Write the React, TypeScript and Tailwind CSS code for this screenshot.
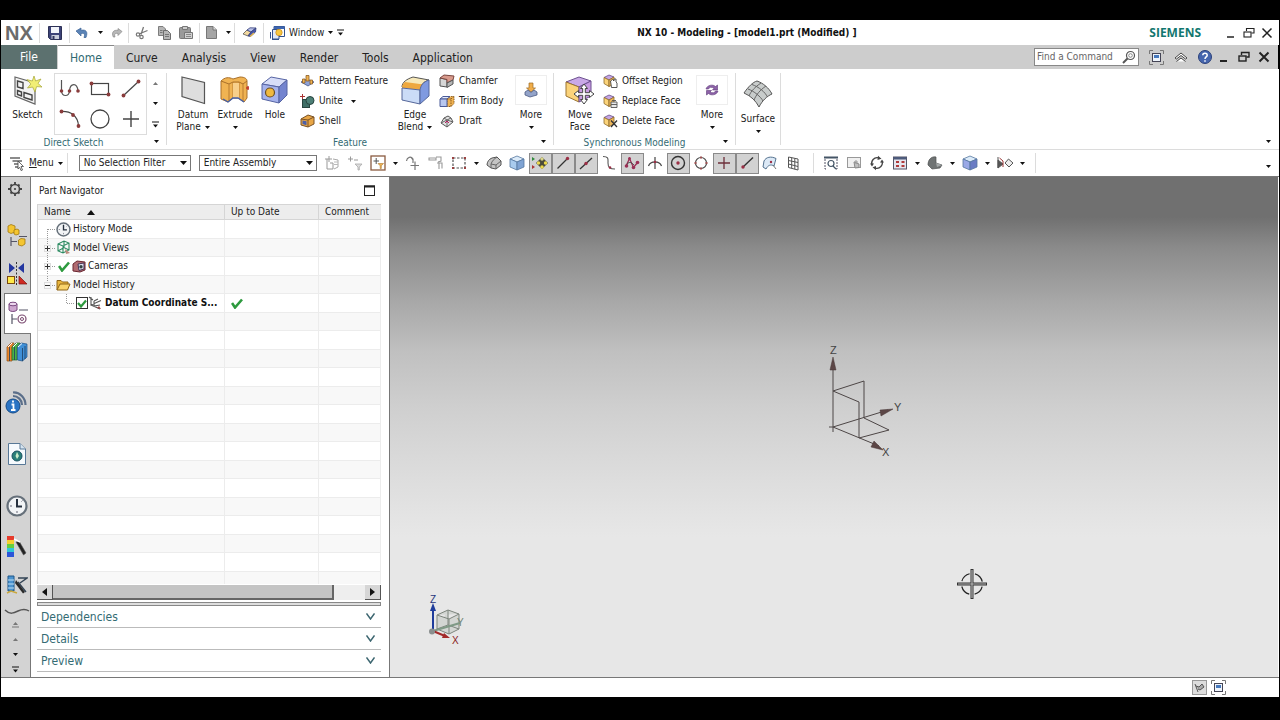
import React, { useState } from 'react';

const EMPTY_ROWS = 15;

const TABS = ['Home', 'Curve', 'Analysis', 'View', 'Render', 'Tools', 'Application'];

const SECTIONS = ['Dependencies', 'Details', 'Preview'];

function Svg({ w = 16, h = 16, children }: { w?: number; h?: number; children: React.ReactNode }) {
  return (
    <svg width={w} height={h} viewBox={`0 0 ${w} ${h}`} fill="none" className="shrink-0" aria-hidden="true">
      {children}
    </svg>
  );
}

/* ---------- small shared pieces ---------- */

const Caret = ({ up = false, dim = false }: { up?: boolean; dim?: boolean }) => (
  <Svg w={5} h={3}>
    <path d={up ? 'M0 3L2.5 0L5 3Z' : 'M0 0H5L2.5 3Z'} fill={dim ? '#777' : '#111'} />
  </Svg>
);

const BarCaret = ({ up = false, dim = false }: { up?: boolean; dim?: boolean }) => (
  <Svg w={7} h={7}>
    {up ? (
      <path d="M1 4L3.5 1L6 4ZM0 5.5H7V6.5H0Z" fill={dim ? '#777' : '#111'} />
    ) : (
      <path d="M0 0.5H7V1.5H0ZM1 3.5H6L3.5 6.5Z" fill={dim ? '#777' : '#111'} />
    )}
  </Svg>
);

const Sep = ({ tall = false }: { tall?: boolean }) => (
  <div className={`w-px shrink-0 bg-[#dcdcdc] ${tall ? 'mt-0.5 h-[72px]' : 'h-5'}`} />
);

const MinimizeIcon = ({ bold = false }) => (
  <Svg w={12} h={12}><path d="M2 10H9" stroke="#222" strokeWidth={bold ? 2 : 1.5} /></Svg>
);
const RestoreIcon = ({ bold = false }) => (
  <Svg w={12} h={12}>
    <path d="M3.5 4V1.5H11V6H8.5" stroke="#222" strokeWidth={bold ? 1.4 : 1.1} />
    <rect x="1" y="5" width="7" height="5" stroke="#222" strokeWidth={bold ? 1.4 : 1.1} />
  </Svg>
);
const CloseIcon = ({ bold = false }) => (
  <Svg w={12} h={12}><path d="M1.5 1.5L10.5 10.5M10.5 1.5L1.5 10.5" stroke="#222" strokeWidth={bold ? 2 : 1.5} /></Svg>
);

const FullScreenIcon = () => (
  <Svg w={15} h={15}>
    <path d="M.5 4V.5H4M11 .5H14.5V4M14.5 11V14.5H11M4 14.5H.5V11" stroke="#777" />
    <rect x="3.5" y="3.5" width="8" height="8" fill="#eef4fb" stroke="#445" />
    <path d="M5 5H10V8H5Z" fill="#4779bd" />
  </Svg>
);

/* ---------- quick access icons ---------- */

const SaveIcon = () => (
  <Svg w={14} h={14}>
    <path d="M.5 .5H13.5V13.5H2.5L.5 11.5Z" fill="#3c4277" stroke="#2c3055" />
    <path d="M3 1H11V7H3Z" fill="#f2f4fa" />
    <path d="M3.5 9H11V13H3.5Z" fill="#c9cddb" />
    <path d="M4.5 10H6.5V13H4.5Z" fill="#30355f" />
  </Svg>
);
const UndoIcon = () => (
  <Svg w={14} h={12}>
    <path d="M1 4L6 1V3.4C11 2 13.2 5 11 10.5H9C10.3 7 9 5.8 6 6.6V9Z" fill="#5b83b6" stroke="#3b6396" strokeWidth=".7" />
  </Svg>
);
const RedoIcon = () => (
  <Svg w={12} h={12}>
    <path d="M11 4.5L7 1.5V3.4C2.5 2.6 .3 5.5 2.3 10H4C3 7 4 6 7 6.4V8.5Z" fill="#b8b8b8" stroke="#888" strokeWidth=".7" />
  </Svg>
);
const CutIcon = () => (
  <Svg w={14} h={14}>
    <path d="M8.5 1L6 8.5M12.5 4.5L4 8" stroke="#777" strokeWidth="1.3" />
    <circle cx="3" cy="8.5" r="1.7" stroke="#777" strokeWidth="1.2" />
    <circle cx="6.5" cy="11" r="1.7" stroke="#777" strokeWidth="1.2" />
  </Svg>
);
const CopyIcon = () => (
  <Svg w={13} h={14}>
    <path d="M.5 .5H5L7.5 3V9.5H.5Z" fill="#b6b6b6" stroke="#7d7d7d" />
    <path d="M5.5 4.5H9.5L12.5 7.5V13.5H5.5Z" fill="#b6b6b6" stroke="#6d6d6d" />
    <path d="M7 8.5H11M7 10.5H11M2 4.5H4.5M2 6.5H4.5" stroke="#777" />
  </Svg>
);
const PasteIcon = () => (
  <Svg w={14} h={14}>
    <rect x=".5" y="1.5" width="11" height="11" rx="1" fill="#9a9a9a" stroke="#777" />
    <path d="M3.5 .5H8.5V3.5H3.5Z" fill="#ccc" stroke="#777" />
    <path d="M5.5 6.5H13.5V12.5H5.5Z" fill="#d0d0d0" stroke="#777" />
    <path d="M7 8.5H12M7 10.5H12" stroke="#888" />
  </Svg>
);
const DocIcon = () => (
  <Svg w={11} h={13}><path d="M.5 .5H7L10.5 4V12.5H.5Z" fill="#a5a5a5" stroke="#777" /><path d="M7 .5V4H10.5" fill="#ddd" stroke="#777" /></Svg>
);
const EraserIcon = () => (
  <Svg w={15} h={11}>
    <path d="M1 7L5 3L9 5L6 9Z" fill="#f3d9a0" stroke="#555" strokeWidth=".8" />
    <path d="M5 3L8 .8L14 1L9 5Z" fill="#b9c0e6" stroke="#333f7c" strokeWidth=".8" />
    <path d="M9 5L14 1L13.5 5L8.5 9.5L6 9Z" fill="#4a58a8" stroke="#333f7c" strokeWidth=".8" />
    <path d="M8 9.5L12 6" stroke="#e7b84c" strokeWidth="1.4" />
  </Svg>
);
const WindowIcon = () => (
  <Svg w={15} h={14}>
    <path d="M4 .5H14.5V10.5H4Z" fill="#fff" stroke="#31508c" />
    <path d="M4 .5H14.5V3H4Z" fill="#3e66b0" />
    <path d="M2.5 3.5H9V13H2.5Z" fill="#dfe8f7" stroke="#31508c" />
    <circle cx="9" cy="6.5" r="3.2" fill="#f7c63f" stroke="#c58a1b" strokeWidth=".7" />
    <path d="M.5 12.5V6M2 13.5H9" stroke="#31508c" />
  </Svg>
);

/* ---------- ribbon icons ---------- */

const SketchIcon = () => (
  <Svg w={30} h={29}>
    <path d="M2 1L22 7V28L2 20Z" fill="#f3f3f3" stroke="#666" strokeWidth="1.2" />
    <path d="M4.5 5L10 6.5V12.5L4.5 11ZM4.5 14.5L8.5 16V20L4.5 18.5ZM11 16.5L19 19V24L11 21.5Z" stroke="#444" strokeWidth="1.4" />
    <path d="M21 0L22.6 5L28 3L25 7.4L29 11L23.6 10.6L22 16L19.6 11L14.5 12L17.8 8L14 3.6L19.3 5Z" fill="#f1ee75" stroke="#a5a535" strokeWidth=".7" />
  </Svg>
);
const SplineIcon = () => (
  <Svg w={22} h={20}>
    <path d="M2.5 1V12C3 18 10 18 10.500 12C11 4 18.500 3 19 12" stroke="#555" strokeWidth="1.2" />
    <circle cx="2.5" cy="12" r="1.8" fill="#8a3c3c" /><circle cx="10.5" cy="12" r="1.8" fill="#8a3c3c" /><circle cx="19" cy="12" r="1.8" fill="#8a3c3c" />
  </Svg>
);
const RectIcon = () => (
  <Svg w={22} h={18}>
    <rect x="2.5" y="3.5" width="17" height="11" stroke="#444" strokeWidth="1.2" />
    <circle cx="2.5" cy="3.5" r="1.9" fill="#8a3c3c" /><circle cx="19.5" cy="14.5" r="1.9" fill="#8a3c3c" />
  </Svg>
);
const LineIcon = () => (
  <Svg w={20} h={20}>
    <path d="M2 17L18 2" stroke="#444" strokeWidth="1.2" /><circle cx="2.5" cy="16.5" r="1.9" fill="#8a3c3c" /><circle cx="17.5" cy="2.5" r="1.9" fill="#8a3c3c" />
  </Svg>
);
const ArcIcon = () => (
  <Svg w={22} h={20}>
    <path d="M2 2.5C12 2 19 7 19.5 17" stroke="#444" strokeWidth="1.2" />
    <circle cx="2.5" cy="2.5" r="1.9" fill="#8a3c3c" /><circle cx="14" cy="6" r="1.9" fill="#8a3c3c" /><circle cx="19.5" cy="17" r="1.9" fill="#8a3c3c" />
  </Svg>
);
const CircleIcon = () => <Svg w={22} h={22}><circle cx="11" cy="11" r="9" stroke="#444" strokeWidth="1.3" /></Svg>;
const PlusIcon = () => <Svg w={18} h={18}><path d="M9 1V17M1 9H17" stroke="#444" strokeWidth="1.4" /></Svg>;

const PlaneIcon = () => (
  <Svg w={28} h={29}><path d="M3 1L25.5 6.5V27.5L3 20.5Z" fill="#dedede" stroke="#555" strokeWidth="1.2" /></Svg>
);
const ExtrudeIcon = () => (
  <Svg w={30} h={28}>
    <path d="M1 5C5 1 9 1 13 3L20 1C25 1 27 3 27 5V22L24 26L18 22H13L8 26L1 23Z" fill="#f0b352" stroke="#a9702a" />
    <path d="M1 5L9 8L13 6H19L23 8L27 5" stroke="#a9702a" />
    <path d="M9 8V25M13 6V22M19 6V22M23 8V25" stroke="#b97c30" />
    <path d="M13 7H19V22H13Z" fill="#f8cf8a" />
    <path d="M3 23L8 26L13 22H18L24 26" stroke="#4560a8" strokeWidth="1.4" />
    <path d="M26 12H29M28 10V14" stroke="#c0392b" strokeWidth="1.4" />
  </Svg>
);
const HoleIcon = () => (
  <Svg w={28} h={28}>
    <path d="M1 8L10 1L26 4L18 11Z" fill="#d7ddf8" stroke="#5664a3" />
    <path d="M1 8L18 11V27L1 23Z" fill="#a5b2ec" stroke="#5664a3" />
    <path d="M18 11L26 4V19L18 27Z" fill="#7384cf" stroke="#5664a3" />
    <circle cx="9" cy="16.5" r="4.5" fill="#f0b93f" stroke="#6b4f22" strokeWidth="1.2" />
  </Svg>
);
const BlendIcon = () => (
  <Svg w={29} h={29}>
    <path d="M1 11C1 6 6 3 12 1L28 4C22 6 20 9 19 13Z" fill="#f7e9b9" stroke="#555" />
    <path d="M1 12C1 9 2 7.500 4 6L22.500 8.500C20.500 10 19.500 12 19 14Z" fill="#eea83f" />
    <path d="M1 12L19 14V28L1 24Z" fill="#cbdcf7" stroke="#55679a" />
    <path d="M19 14C20 9 22 6 28 4V20L19 28Z" fill="#7f9ae0" stroke="#55679a" />
  </Svg>
);
const MoveFaceIcon = () => (
  <Svg w={30} h={29}>
    <path d="M1 6L14 1L26 5L14 11Z" fill="#c9a8e6" stroke="#6d5190" />
    <path d="M1 6L14 11V26L1 20Z" fill="#fbd37a" stroke="#9b7430" />
    <path d="M14 11L26 5V20L14 26Z" fill="#c79ae0" stroke="#6d5190" />
    <path d="M19 8L22.5 12.5H20.3V16.7H24.5V14.5L29 18L24.5 21.5V19.3H20.3V23.5H22.5L19 28L15.5 23.5H17.7V19.3H13.5V21.5L9 18L13.5 14.5V16.7H17.7V12.5H15.5Z" fill="#fff" stroke="#444" />
  </Svg>
);
const SurfaceIcon = () => (
  <Svg w={30} h={28}>
    <path d="M1 13C5 7 10 2 14 1C20 3 26 8 29 14C24 16 19 21 16 27C13 21 8 16 1 13Z" fill="#c8cccb" stroke="#555" />
    <path d="M5 9C11 11 18 17 20 21M9 4.5C16 7 22 12 24.5 17M18 3C12 7 8 11 6 16M23 6C17 10 13 15 11 20" stroke="#666" />
  </Svg>
);
const FeatureMoreIcon = () => (
  <Svg w={14} h={16}>
    <path d="M5 1H9V6H11.5L7 10L2.5 6H5Z" fill="#f0ad4a" stroke="#9b6a24" strokeWidth=".7" />
    <path d="M1 10L4 8L7 10.5L10 8L13 10V13L6 15L1 13Z" fill="#93a3c9" stroke="#4a5982" strokeWidth=".8" />
  </Svg>
);
const SyncMoreIcon = () => (
  <Svg w={16} h={14}>
    <path d="M2 6C3 2 9 1 11.5 3.5L13.5 2V7H8.5L10 5.3C8 3.8 5 4 4.5 6Z" fill="#8d62a8" stroke="#5e3b78" strokeWidth=".6" />
    <path d="M14 8C13 12 7 13 4.5 10.5L2.5 12V7.5H7.5L6 9C8 10.3 11 10 11.5 8Z" fill="#8d62a8" stroke="#5e3b78" strokeWidth=".6" />
  </Svg>
);

const PatternIcon = () => (
  <Svg w={15} h={14}>
    <path d="M1 8L7 5L14 8L8 12Z" fill="#8fa3d8" stroke="#45568a" strokeWidth=".8" />
    <path d="M6 1.5H9V7H6Z" fill="#f0b352" stroke="#8a5d23" strokeWidth=".8" />
    <path d="M2.5 5H5V9H2.5ZM10 6H12.5V10H10Z" fill="#f0b352" stroke="#8a5d23" strokeWidth=".8" />
  </Svg>
);
const UniteIcon = () => (
  <Svg w={15} h={14}>
    <rect x="2.5" y="5.5" width="7" height="8" fill="#3f6e66" stroke="#28443f" />
    <circle cx="10" cy="6.5" r="4" fill="#4d7f76" stroke="#28443f" />
    <path d="M2.5 0V5M0 2.5H5" stroke="#a33" strokeWidth="1" />
  </Svg>
);
const ShellIcon = () => (
  <Svg w={15} h={14}>
    <path d="M1 5L8 1L14 3V10L8 13L1 11Z" fill="#e8a646" stroke="#7a5226" />
    <path d="M1 5L8 6L14 3M8 6V13" stroke="#7a5226" />
    <path d="M2.5 6.5L6.5 7.3V11.3L2.5 10Z" fill="#4c5fa8" />
  </Svg>
);
const ChamferIcon = () => (
  <Svg w={16} h={15}>
    <path d="M1 4L8 5.5V13L1 12Z" fill="#d6d6d6" stroke="#555" />
    <path d="M1 4L5 1L15 2L14 6L8 9V5.5Z" fill="#d89a8c" stroke="#7a4740" />
    <path d="M8 9L14 6V10L8 13.5Z" fill="#b5b5b5" stroke="#555" />
  </Svg>
);
const TrimIcon = () => (
  <Svg w={16} h={13}>
    <path d="M8 4L11 1.5H15V8.5L12 11.5H8Z" fill="#f0b352" stroke="#8a5d23" strokeDasharray="1.5 1" />
    <path d="M1 4L4 1.5H11L8 4Z" fill="#e4ebfa" stroke="#4a5a98" />
    <path d="M1 4H8V11.5H1Z" fill="#b8c7ef" stroke="#4a5a98" />
    <path d="M8 4H12V11.5M12 4L15 1.5" stroke="#8a5d23" strokeDasharray="1.5 1" />
  </Svg>
);
const DraftIcon = () => (
  <Svg w={14} h={13}>
    <path d="M1 8L4 3L8 1L11 3L13 7L7 12Z" fill="#e3e3e3" stroke="#555" />
    <path d="M4 3L7 5L11 3M7 5V12M1 8L7 5L13 7" stroke="#666" />
    <path d="M5 8L7 6L9 8" stroke="#b05" strokeWidth=".9" />
  </Svg>
);
const FaceIcon = ({ kind }: { kind: 'offset' | 'replace' | 'delete' }) => (
  <Svg w={15} h={14}>
    <path d="M1 3.5L6 1L11 3L6 6Z" fill="#c6a6e2" stroke="#67508a" strokeWidth=".8" />
    <path d="M1 3.5L6 6V12.5L1 9.5Z" fill="#fbd37a" stroke="#8d6a2a" strokeWidth=".8" />
    <path d="M6 6L11 3V10L6 12.5Z" fill="#eeb75a" stroke="#8d6a2a" strokeWidth=".8" />
    {kind === 'offset' && <path d="M7.5 7L9.5 5.5L11 7V5H13V8L14 9V13.5H8.5Z" fill="#fff" stroke="#444" strokeWidth=".9" />}
    {kind === 'replace' && <path d="M8 8H14V13.5H8ZM8 10.5H14M9 6.5H13" fill="#e9e9e9" stroke="#555" strokeWidth=".9" />}
    {kind === 'delete' && <path d="M8 6.5L14 13M14 6.5L8 13" stroke="#333" strokeWidth="1.3" />}
  </Svg>
);

/* ---------- selection bar icons ---------- */

const MenuIcon = () => (
  <Svg w={16} h={15}>
    <path d="M1 2H11M3.5 5H13M5 8H10M6 11H10" stroke="#666" strokeWidth="1.5" />
    <path d="M9 5L14.5 10.5H12L13.5 14L12 14.5L10.7 11.3L9 13Z" fill="#fff" stroke="#444" strokeWidth=".8" />
  </Svg>
);
const FilterResetIcon = () => (
  <Svg>
    <path d="M3 4V14H9V8H6M1 4H8M5 1V7" stroke="#999" /><path d="M9 4L14 5V12L10 14" stroke="#aaa" /><path d="M10 7H14M10 9.5H14" stroke="#bbb" />
  </Svg>
);
const FilterOffIcon = () => (
  <Svg><path d="M1 4H6M3.5 1.5V6.5M7 5H11" stroke="#999" /><path d="M8 9H15L12.3 12V15H11V12Z" fill="#ddd" stroke="#aaa" strokeWidth=".8" /></Svg>
);
const FilterOnIcon = () => (
  <Svg>
    <rect x="1" y="1" width="14" height="14" stroke="#8a5b40" strokeWidth="1.3" />
    <path d="M3.5 6H9M6.2 3V9" stroke="#555" /><path d="M8 8.5H13.5L11.3 10.8V13.5H10.2V10.8Z" fill="#f0b352" stroke="#b0772a" strokeWidth=".6" />
  </Svg>
);
const SnapCurveIcon = () => (
  <Svg><path d="M1.5 6C2 2 6 1 8 4V8M8 5L6.5 3M5.5 10.5H14M10 6.5V15" stroke="#777" strokeWidth="1.2" /></Svg>
);
const HandIcon = () => (
  <Svg><path d="M1 3H8V5H1ZM8 2H13V6L10 7M9 8H14V13.5M11 8V14" stroke="#999" strokeWidth="1.1" /></Svg>
);
const MarqueeIcon = () => (
  <Svg w={17}>
    <rect x="2" y="3" width="12" height="10" stroke="#555" strokeWidth="1.2" strokeDasharray="2.5 1.5" />
    <path d="M1 2H3V4H1ZM13 2H15V4H13ZM1 12H3V14H1ZM13 12H15V14H13Z" fill="#9a4141" />
  </Svg>
);
const BlockIcon = () => (
  <Svg><path d="M1 10C1 7 3 4 6 3L11 2L15 6V10L10 14L5 13Z" fill="#c4c4c4" stroke="#555" /><path d="M5 13V9C6 6 8 4 11 2M5 9L10 10V14M10 10L15 6" stroke="#666" /></Svg>
);
const ShadedCubeIcon = ({ left = '#a9cbee', right = '#7fa3d3' }: { left?: string; right?: string }) => (
  <Svg>
    <path d="M1 4L8 1L15 4L8 7Z" fill="#dcebf9" stroke="#55779f" strokeWidth=".8" />
    <path d="M1 4L8 7V15L1 12Z" fill={left} stroke="#55779f" strokeWidth=".8" />
    <path d="M15 4L8 7V15L15 12Z" fill={right} stroke="#55779f" strokeWidth=".8" />
  </Svg>
);
const SnapPointIcon = () => (
  <Svg w={18}>
    <path d="M1 2L4 4L1 6Z" fill="#2f8b3a" /><path d="M1 10L4 12L1 14Z" fill="#a33" />
    <path d="M11 2L14 5L17 8L14 11L11 14L8 11L5 8L8 5Z" fill="#4b4b3c" />
    <circle cx="11" cy="4" r="1.7" fill="#d9d58a" /><circle cx="7.5" cy="8" r="1.7" fill="#ecd94c" /><circle cx="14.5" cy="8" r="1.7" fill="#ecd94c" /><circle cx="11" cy="12" r="1.7" fill="#ecd94c" />
  </Svg>
);
const EndPointIcon = () => <Svg><path d="M2.5 13.5L12.5 3.5" stroke="#333" strokeWidth="1.3" /><circle cx="12.5" cy="3.5" r="1.7" fill="#9b2f45" /></Svg>;
const MidPointIcon = () => <Svg><path d="M2 14L14 3" stroke="#333" strokeWidth="1.3" /><circle cx="8" cy="8.5" r="1.7" fill="#9b2f45" /></Svg>;
const ControlPointIcon = () => <Svg><path d="M2 1.5C8 1.5 7 4 7 8C7 13 9 14 14 14" stroke="#555" strokeWidth="1.1" /><circle cx="9" cy="12.5" r="1.3" fill="#9b2f45" /></Svg>;
const PoleIcon = () => (
  <Svg>
    <path d="M2 11L5.5 3.5L9.5 12.5L13.5 7.5" stroke="#9b2f55" strokeWidth="1.3" /><path d="M2 11C5 5 8 8 10 10" stroke="#444" />
    <circle cx="2.5" cy="11" r="1.8" fill="#9b2f55" /><circle cx="5.5" cy="3.5" r="1.5" fill="#9b2f55" /><circle cx="9.5" cy="12.5" r="1.8" fill="#9b2f55" /><circle cx="13.5" cy="7.5" r="1.8" fill="#9b2f55" />
  </Svg>
);
const IntersectIcon = () => <Svg><path d="M8 2V14M1.5 11C3.5 5.5 12.5 5.5 14.5 11" stroke="#444" strokeWidth="1.2" /><circle cx="8" cy="7" r="1.3" fill="#9b2f45" /></Svg>;
const CenterIcon = () => <Svg><circle cx="8" cy="8" r="6.5" stroke="#333" strokeWidth="1.4" /><circle cx="8" cy="8" r="1.7" fill="#9b2f45" /></Svg>;
const QuadrantIcon = () => (
  <Svg><circle cx="8" cy="8" r="5.5" stroke="#444" strokeWidth="1.2" /><path d="M7 1.5H9V3.5H7ZM7 12.5H9V14.5H7ZM1.5 7H3.5V9H1.5ZM12.5 7H14.5V9H12.5Z" fill="#9b4f4f" /></Svg>
);
const ExistingPointIcon = () => <Svg><path d="M8 2V14M2 8H14" stroke="#6d2f3a" strokeWidth="1.3" /></Svg>;
const PointOnCurveIcon = () => <Svg><path d="M4 12L14 2.5" stroke="#333" strokeWidth="1.4" /><circle cx="4" cy="12" r="1.7" fill="#9b2f45" /></Svg>;
const PointOnFaceIcon = () => (
  <Svg><path d="M2 6C4 2 9 1 14 3.5L12 11C9 9 6 10 4 14L1 12Z" fill="#dce9f6" stroke="#54728f" /><circle cx="9" cy="7" r="1.2" fill="#9b2f45" /><path d="M11 10L14 14" stroke="#777" /></Svg>
);
const GridIcon = () => <Svg><path d="M3.5 2L13 4V15L3.5 12.5ZM3.5 5.5L13 7.5M3.5 9L13 11.5M6.7 2.7V13.3M9.8 3.4V14.2" stroke="#555" /></Svg>;
const FitIcon = () => (
  <Svg><path d="M1 2.5H15" stroke="#456" strokeWidth="2" /><path d="M2 4V14H4M14 4V14H12" stroke="#556" strokeDasharray="2 1" /><circle cx="8" cy="8.5" r="3" stroke="#456" strokeWidth="1.2" /><path d="M10 11L13 14" stroke="#456" strokeWidth="1.3" /></Svg>
);
const ZoomIcon = () => (
  <Svg><rect x="1.5" y="2.5" width="13" height="10" fill="#f0f0f0" stroke="#999" /><path d="M8 7L13 9V12.5L9 13Z" fill="#c0c0c0" stroke="#888" /><path d="M10 5V9M8 7H12" stroke="#999" /></Svg>
);
const RotateIcon = () => (
  <Svg>
    <path d="M3 10A5.500 5.500 0 0 1 9.500 2.800M13 6A5.500 5.500 0 0 1 6.500 13.200" stroke="#444" strokeWidth="1.3" />
    <path d="M9 .8L12.500 3.800L8.500 5ZM7 11L3.500 12.200L7 15.200ZM1 8.500L5 8.500L3 11.500ZM11 7.500H15L13 4.500Z" fill="#444" />
  </Svg>
);
const OrientIcon = () => (
  <Svg><rect x="1.5" y="2" width="13" height="12" fill="#e6e6ee" stroke="#556" /><path d="M1.5 2H14.5V4.5H1.5Z" fill="#4d5b7c" /><path d="M4 7H7M9.5 7H12.5M4 11H7M9.5 11H12.5" stroke="#b03a3a" strokeWidth="2" /></Svg>
);
const RenderStyleIcon = () => (
  <Svg><path d="M1 10C1 5 4 1 9 2V8L15 10L13 13L5 14Z" fill="#6f7373" stroke="#4d5050" strokeWidth=".7" /><path d="M9 8L15 10L10 12Z" fill="#a5a9a9" /></Svg>
);
const SectionIcon = () => (
  <Svg w={17}><path d="M1 2V13M1 5L6 9L1 13Z" fill="#555" stroke="#555" /><path d="M2.5 3L6 6V12" stroke="#933" /><path d="M8 8L11.5 4L16 8L12 12Z" fill="#eee" stroke="#555" /></Svg>
);

/* ---------- resource bar icons ---------- */

const GearIcon = () => (
  <Svg>
    <circle cx="8" cy="8" r="4.5" stroke="#444" strokeWidth="1.6" /><circle cx="8" cy="8" r="1.1" fill="#444" />
    <path d="M8 1V4M8 12V15M1 8H4M12 8H15M3.5 3.5L5 5M11 11L12.5 12.5M12.5 3.5L11 5M5 11L3.5 12.5" stroke="#444" strokeWidth="1.8" />
  </Svg>
);
const AssemblyNavIcon = () => (
  <Svg w={20} h={24}>
    <path d="M1 2L4 .5L8 2V8L4 9.5L1 8Z" fill="#f4c531" stroke="#a27a10" strokeWidth=".8" /><path d="M7 6L10 5L12 6V10L9 11L7 10Z" fill="#f4c531" stroke="#a27a10" strokeWidth=".8" />
    <path d="M12 12.5H20M4 13V22M4 17.5H10" stroke="#556" strokeWidth="1.2" />
    <path d="M11.5 16L14 14.5L18 15V20L15 22L11.5 21Z" fill="#f4c531" stroke="#a27a10" strokeWidth=".8" />
  </Svg>
);
const ConstraintNavIcon = () => (
  <Svg w={20} h={24}>
    <path d="M2 1L8 6L2 11ZM17 1L11 6L17 11Z" fill="#2437a0" /><path d="M9.5 0V24" stroke="#333" strokeDasharray="2 1.5" />
    <rect x=".5" y="14.5" width="7" height="7" fill="#ffe94a" stroke="#7a4a10" /><path d="M12 14V22H20Z" fill="#cf2a22" stroke="#7a1512" strokeWidth=".7" />
  </Svg>
);
const PartNavIcon = () => (
  <Svg w={20} h={24}>
    <path d="M1 3V9C2.5 11 7 11 9 9V3Z" fill="#cda6cf" stroke="#7a4a80" /><ellipse cx="5" cy="3" rx="4" ry="1.8" fill="#ecd6ee" stroke="#7a4a80" />
    <path d="M11 9H20M4 13V23M4 18H9" stroke="#556" strokeWidth="1.2" /><circle cx="14" cy="18" r="4" stroke="#7a4a70" strokeWidth="1.2" /><circle cx="14" cy="18" r="1.5" stroke="#7a4a70" />
  </Svg>
);
const LibraryIcon = () => (
  <Svg w={22} h={20}>
    <path d="M1 5L5 1H8L6 5V19H1Z" fill="#e8862c" stroke="#914d12" strokeWidth=".7" /><path d="M6 5L10 1H14L11 5V18H6Z" fill="#49b04a" stroke="#22672a" strokeWidth=".7" />
    <path d="M11.5 5L15 1L21 2V15L16.5 19L11.5 18Z" fill="#3f8fd6" stroke="#1e5287" strokeWidth=".7" /><path d="M16.5 6V19M19 4V17M3.5 5V19M8.5 5V18" stroke="#1d3e60" strokeWidth=".8" />
    <path d="M2 5L6 1M7 5L11 1M12 5L16 1.5" stroke="#fff" />
  </Svg>
);
const InfoIcon = () => (
  <Svg w={23} h={24}>
    <path d="M8 2.5C15 2 20.5 8 20.5 15M8 6C13 6 17 10 17 15" stroke="#5b6f8a" strokeWidth="2.2" />
    <circle cx="8" cy="16" r="7" fill="#2a74c4" stroke="#164c89" /><path d="M8 10.5V12.5M6.500 14.5H8.5V20M6 20H10.5" stroke="#fff" strokeWidth="1.8" />
  </Svg>
);
const WebIcon = () => (
  <Svg w={18} h={22}>
    <path d="M.5 .5H12L17.5 6V21.5H.5Z" fill="#f6fafd" stroke="#587897" /><path d="M12 .5V6H17.5" fill="#d7e5f1" stroke="#587897" />
    <circle cx="9" cy="13" r="5" fill="#2a7f78" stroke="#174f5f" /><path d="M9 9L11 13L9 16L7.5 13Z" fill="#c9ecc8" />
  </Svg>
);
const ClockIcon = ({ size = 22 }: { size?: number }) => (
  <svg width={size} height={size} viewBox="0 0 22 22" fill="none" className="shrink-0" aria-hidden="true">
    <circle cx="11" cy="11" r="9.5" fill="#f2f4f6" stroke="#66707a" strokeWidth="2.2" />
    <path d="M11 4V11.5H16" stroke="#26303e" strokeWidth="2" /><path d="M11 16V18M4 11H6M16.5 5.5L15.5 6.5" stroke="#667" />
  </svg>
);
const PaletteIcon = () => (
  <Svg w={22} h={22}>
    <path d="M1 0H8V4H1Z" fill="#e63b2b" /><path d="M1 4H8V8H1Z" fill="#f6d02f" /><path d="M1 8H8V12H1Z" fill="#65cf3d" /><path d="M1 12H8V16H1Z" fill="#2fc6d8" /><path d="M1 16H8V21H1Z" fill="#2c55d8" />
    <path d="M10 6L13 5L20 17L17.5 19Z" fill="#222" stroke="#555" strokeWidth=".6" /><path d="M8 3L14 6" stroke="#fff" strokeWidth="1.5" />
  </Svg>
);
const VisualWizardIcon = () => (
  <Svg w={22} h={20}>
    <path d="M2 1H8V16H2Z" fill="#4b93cf" stroke="#1f5788" /><path d="M2 5H8M2 9H8M2 13H8" stroke="#bfe0f5" /><path d="M1 18L5 16L11 18" stroke="#c9a83f" strokeWidth="1.5" />
    <path d="M12 3H21L14 8M12 7L20 17" stroke="#345" strokeWidth="1.4" /><path d="M10 5L19 17L17 18.5L9 8Z" fill="#2a2a2a" />
  </Svg>
);
const WaveIcon = () => <Svg w={26} h={6}><path d="M1 2C6 7 10 5 14 3C18 1 22 1 25 3" stroke="#555" strokeWidth="1.5" /></Svg>;

/* ---------- tree icons ---------- */

const CheckIcon = () => <Svg w={12} h={11}><path d="M1 5L4 9.5L11 1.5" stroke="#2d9a3e" strokeWidth="2.6" /></Svg>;
const ViewsIcon = () => (
  <Svg w={15} h={15}><path d="M2 4L8 1L13 3V10L7 13L2 11ZM2 4L7 6L13 3M7 6V13M2 11L8 7.5L13 10M8 1V7.5" stroke="#2c8b62" strokeWidth="1.1" /><path d="M9 9L14 13L10 14" fill="#ba8b7c" /></Svg>
);
const CameraIcon = () => (
  <Svg w={14} h={13}><path d="M1 4L5 1L13 2V10L8 12L1 11Z" fill="#b06a70" stroke="#6a2630" /><path d="M6 4L12 3V9L7 10.5Z" fill="#dde" stroke="#435" /><circle cx="9" cy="6.8" r="1.7" fill="#344" /></Svg>
);
const FolderIcon = () => (
  <Svg w={15} h={12}><path d="M1 11V1.5H5L6.5 3H12V5" fill="#e8b43c" stroke="#8f6414" /><path d="M1 11L4 5H14L11.5 11Z" fill="#f9d36a" stroke="#8f6414" /></Svg>
);
const CsysIcon = () => (
  <Svg w={15} h={14}><path d="M3 1V9L13 4.5M3 9L12 13M1 1L5 4M6 5V10L12 9M6 5L10 3" stroke="#555" strokeWidth="1.1" /><path d="M9 12L13 13L11 10Z" fill="#944" /></Svg>
);

const SNAP_TOGGLES: { name: string; icon: React.ReactNode; on: boolean }[] = [
  { name: 'Enable Snap Point', icon: <SnapPointIcon />, on: true },
  { name: 'End Point', icon: <EndPointIcon />, on: true },
  { name: 'Mid Point', icon: <MidPointIcon />, on: true },
  { name: 'Control Point', icon: <ControlPointIcon />, on: false },
  { name: 'Pole', icon: <PoleIcon />, on: true },
  { name: 'Intersection Point', icon: <IntersectIcon />, on: false },
  { name: 'Arc Center', icon: <CenterIcon />, on: true },
  { name: 'Quadrant Point', icon: <QuadrantIcon />, on: false },
  { name: 'Existing Point', icon: <ExistingPointIcon />, on: true },
  { name: 'Point on Curve', icon: <PointOnCurveIcon />, on: true },
  { name: 'Point on Face', icon: <PointOnFaceIcon />, on: false },
  { name: 'Bounded Grid', icon: <GridIcon />, on: false },
];

const TREE = [
  { name: 'History Mode', expander: '', icon: <ClockIcon size={15} />, check: false },
  { name: 'Model Views', expander: '+', icon: <ViewsIcon />, check: false },
  { name: 'Cameras', expander: '+', icon: <CameraIcon />, check: true },
  { name: 'Model History', expander: '-', icon: <FolderIcon />, check: false },
];

function IconButton({ label, className = 'w-[22px]', children }: { label: string; className?: string; children: React.ReactNode }) {
  return (
    <button type="button" aria-label={label} className={`flex h-5 shrink-0 items-center justify-center ${className}`}>
      {children}
    </button>
  );
}

function BigButton({ icon, lines, caret, className }: { icon: React.ReactNode; lines: string[]; caret?: boolean; className: string }) {
  return (
    <button type="button" className={`flex shrink-0 flex-col items-center pt-1 text-[10px] leading-3 ${className}`}>
      <span className="mb-1 flex h-[30px] items-center justify-center">{icon}</span>
      <span>{lines[0]}</span>
      <span className="flex h-3 items-center gap-1">
        {lines[1]}
        {caret && <Caret />}
      </span>
    </button>
  );
}

function SmallButton({ icon, label, caret }: { icon: React.ReactNode; label: string; caret?: boolean }) {
  return (
    <button type="button" className="flex h-5 items-center gap-1 whitespace-nowrap">
      <span className="flex w-4 justify-center">{icon}</span>
      {label}
      {caret && <span className="ml-1"><Caret /></span>}
    </button>
  );
}

function Group({ label, className, children }: { label: string; className: string; children: React.ReactNode }) {
  return (
    <section className={`flex shrink-0 flex-col ${className}`}>
      <div className="flex h-16 items-start">{children}</div>
      <div className="flex h-4 items-center">
        <h2 className="flex-1 text-center text-[#336b73]">{label}</h2>
        <button type="button" aria-label={`${label} options`} className="flex w-5 justify-center pb-1"><Caret /></button>
      </div>
    </section>
  );
}

function Combo({ id, label, value, className }: { id: string; label: string; value: string; className: string }) {
  return (
    <div className={`relative shrink-0 ${className}`}>
      <label htmlFor={id} className="sr-only">{label}</label>
      <select id={id} className="block h-4 w-full appearance-none border border-[#777] bg-white pl-1 leading-[14px] outline-none">
        <option>{value}</option>
      </select>
      <span className="pointer-events-none absolute top-1.5 right-1">
        <Svg w={7} h={4}><path d="M0 0H7L3.5 4Z" fill="#111" /></Svg>
      </span>
    </div>
  );
}

function TitleBar() {
  return (
    <header className="flex h-[25px] shrink-0 items-center bg-white">
      <div className="w-[38px] pl-1 font-['Liberation_Sans',sans-serif] text-xl leading-6 font-bold text-[#6b6b6b]">NX</div>
      <Sep />
      <IconButton label="Save" className="w-[29px]"><SaveIcon /></IconButton>
      <Sep />
      <IconButton label="Undo" className="w-6"><UndoIcon /></IconButton>
      <IconButton label="Undo list" className="w-3"><Caret /></IconButton>
      <IconButton label="Redo"><RedoIcon /></IconButton>
      <Sep />
      <div className="flex px-0.5">
        <IconButton label="Cut"><CutIcon /></IconButton>
        <IconButton label="Copy"><CopyIcon /></IconButton>
        <IconButton label="Paste"><PasteIcon /></IconButton>
      </div>
      <Sep />
      <IconButton label="Displayed Part"><DocIcon /></IconButton>
      <IconButton label="Displayed Part list" className="w-3"><Caret /></IconButton>
      <Sep />
      <IconButton label="Touch Mode" className="w-7"><EraserIcon /></IconButton>
      <Sep />
      <button type="button" className="ml-1.5 flex items-center gap-1">
        <WindowIcon />
        Window
        <Caret />
      </button>
      <button type="button" aria-label="Toolbar options" className="ml-1"><BarCaret /></button>
      <h1 className="flex-1 text-center font-bold text-[#111]">NX 10 - Modeling - [model1.prt (Modified) ]</h1>
      <div className="font-['Open_Sans',sans-serif] text-xs font-bold text-[#12776f]">SIEMENS</div>
      <div className="ml-6 flex items-center gap-1.5 pr-1.5">
        <button type="button" aria-label="Minimize"><MinimizeIcon /></button>
        <button type="button" aria-label="Restore"><RestoreIcon /></button>
        <button type="button" aria-label="Close"><CloseIcon /></button>
      </div>
    </header>
  );
}

function TabBar({ tab, onTab }: { tab: string; onTab: (t: string) => void }) {
  return (
    <nav className="mr-px flex h-6 shrink-0 items-stretch bg-[#cdcdcd] text-xs">
      <button type="button" className="w-14 bg-[#5c716f] text-white">File</button>
      <div className="ml-px flex">
        {TABS.map((t) => (
          <button
            key={t}
            type="button"
            onClick={() => onTab(t)}
            className={`border-t px-3 ${t === tab ? 'border-[#888] bg-white text-[#2f6a72]' : 'border-transparent text-[#222]'}`}
          >
            {t}
          </button>
        ))}
      </div>
      <div className="ml-auto flex items-center">
        <div className="flex h-[18px] w-[105px] items-center border border-[#888] bg-white pr-0.5 text-[10px]">
          <label htmlFor="find" className="sr-only">Find a Command</label>
          <input id="find" placeholder="Find a Command" className="h-4 min-w-0 flex-1 pl-0.5 leading-4 outline-none placeholder:text-[#666]" />
          <Svg w={14} h={14}>
            <circle cx="8.5" cy="5.5" r="4" stroke="#555" strokeWidth="1.2" /><circle cx="8.5" cy="5.5" r="1.8" stroke="#888" /><path d="M5.5 8.5L1 13" stroke="#555" strokeWidth="2" />
          </Svg>
        </div>
        <div className="ml-2.5 flex items-center gap-2.5">
          <button type="button" aria-label="Full Screen"><FullScreenIcon /></button>
          <button type="button" aria-label="Minimize Ribbon">
            <Svg w={14} h={11}><path d="M1 6L7 1L13 6L11.5 7L7 3.5L2.5 7ZM2.5 9.5L7 6L11.5 9.5" fill="#fff" stroke="#444" /></Svg>
          </button>
          <button type="button" aria-label="Help">
            <Svg w={14} h={14}>
              <circle cx="7" cy="7" r="6.5" fill="#4666ae" stroke="#2b407a" /><path d="M4.8 5.3C4.8 2.5 9.2 2.5 9.2 5.2C9.2 7 7 6.8 7 9M7 10.2V11.7" stroke="#fff" strokeWidth="1.5" />
            </Svg>
          </button>
        </div>
        <div className="ml-1.5 flex items-center gap-2 pr-2">
          <button type="button" aria-label="Minimize part"><MinimizeIcon bold /></button>
          <button type="button" aria-label="Restore part"><RestoreIcon bold /></button>
          <button type="button" aria-label="Close part"><CloseIcon bold /></button>
        </div>
      </div>
    </nav>
  );
}

function Ribbon() {
  return (
    <div className="flex h-[81px] shrink-0 items-start border-b border-[#dcdcdc] bg-white pt-0.5">
      <Group label="Direct Sketch" className="w-[165px]">
        <BigButton icon={<SketchIcon />} lines={['Sketch']} className="w-[53px]" />
        <div className="grid h-[62px] w-[93px] grid-cols-3 place-items-center self-end border border-[#dcdcdc]">
          <button type="button" aria-label="Profile"><SplineIcon /></button>
          <button type="button" aria-label="Rectangle"><RectIcon /></button>
          <button type="button" aria-label="Line"><LineIcon /></button>
          <button type="button" aria-label="Arc"><ArcIcon /></button>
          <button type="button" aria-label="Circle"><CircleIcon /></button>
          <button type="button" aria-label="Point"><PlusIcon /></button>
        </div>
        <div className="flex h-full w-4 flex-col items-center justify-around pt-0.5">
          <button type="button" aria-label="Scroll up" className="flex h-5 items-center"><Caret up dim /></button>
          <button type="button" aria-label="Scroll down" className="flex h-5 items-center"><Caret /></button>
          <button type="button" aria-label="Gallery" className="flex h-5 items-center"><BarCaret /></button>
        </div>
      </Group>
      <Sep tall />
      <Group label="Feature" className="w-[386px]">
        <BigButton icon={<PlaneIcon />} lines={['Datum', 'Plane']} caret className="ml-1.5 w-10" />
        <BigButton icon={<ExtrudeIcon />} lines={['Extrude']} caret className="w-11" />
        <BigButton icon={<HoleIcon />} lines={['Hole']} className="w-9" />
        <div className="ml-1.5 w-24">
          <SmallButton icon={<PatternIcon />} label="Pattern Feature" />
          <SmallButton icon={<UniteIcon />} label="Unite" caret />
          <SmallButton icon={<ShellIcon />} label="Shell" />
        </div>
        <BigButton icon={<BlendIcon />} lines={['Edge', 'Blend']} caret className="w-10" />
        <div className="ml-1 w-18">
          <SmallButton icon={<ChamferIcon />} label="Chamfer" />
          <SmallButton icon={<TrimIcon />} label="Trim Body" />
          <SmallButton icon={<DraftIcon />} label="Draft" />
        </div>
        <BigButton icon={<span className="flex h-[30px] w-8 items-center justify-center border border-[#eee]"><FeatureMoreIcon /></span>} lines={['More']} caret className="w-10" />
      </Group>
      <Sep tall />
      <Group label="Synchronous Modeling" className="w-[181px]">
        <BigButton icon={<MoveFaceIcon />} lines={['Move', 'Face']} className="ml-1 w-11" />
        <div className="w-[90px]">
          <SmallButton icon={<FaceIcon kind="offset" />} label="Offset Region" />
          <SmallButton icon={<FaceIcon kind="replace" />} label="Replace Face" />
          <SmallButton icon={<FaceIcon kind="delete" />} label="Delete Face" />
        </div>
        <BigButton icon={<span className="flex h-[30px] w-8 items-center justify-center border border-[#eee]"><SyncMoreIcon /></span>} lines={['More']} caret className="w-10" />
      </Group>
      <Sep tall />
      <div className="flex h-[74px] w-[44px] shrink-0 justify-center pt-1">
        <BigButton icon={<SurfaceIcon />} lines={['Surface']} caret className="w-10" />
      </div>
      <Sep tall />
      <button type="button" aria-label="Ribbon options" className="mr-2 mb-1 ml-auto flex h-2 items-center self-end"><Caret /></button>
    </div>
  );
}

function SelectionBar() {
  return (
    <div className="flex h-[26px] shrink-0 items-center bg-white">
      <button type="button" className="ml-2 flex items-center gap-1">
        <MenuIcon />
        <span><span className="underline">M</span>enu</span>
        <Caret />
      </button>
      <div className="ml-1 flex"><Sep /></div>
      <Combo id="selection-filter" label="Selection filter" value="No Selection Filter" className="ml-[11px] w-28" />
      <Combo id="selection-scope" label="Selection scope" value="Entire Assembly" className="mr-1 ml-2 w-[118px]" />
      <IconButton label="Reset Filters" className="w-[23px]"><FilterResetIcon /></IconButton>
      <IconButton label="Allow Selection" className="w-[23px]"><FilterOffIcon /></IconButton>
      <IconButton label="General Selection Filters" className="w-[23px]"><FilterOnIcon /></IconButton>
      <IconButton label="Filter list" className="w-3"><Caret /></IconButton>
      <IconButton label="Single Curve" className="w-[23px]"><SnapCurveIcon /></IconButton>
      <IconButton label="Follow" className="w-[23px]"><HandIcon /></IconButton>
      <IconButton label="Rectangle Select" className="w-[23px]"><MarqueeIcon /></IconButton>
      <IconButton label="Select list" className="w-3"><Caret /></IconButton>
      <IconButton label="Highlight Hidden" className="w-[23px]"><BlockIcon /></IconButton>
      <IconButton label="Shaded" className="w-[23px]"><ShadedCubeIcon /></IconButton>
      {SNAP_TOGGLES.map((t) => (
        <button
          key={t.name}
          type="button"
          aria-label={t.name}
          aria-pressed={t.on}
          className={`flex h-[21px] w-[23px] shrink-0 items-center justify-center border ${t.on ? 'border-[#8a8a8a] bg-[#d2d2d2]' : 'border-transparent'}`}
        >
          {t.icon}
        </button>
      ))}
      <div className="mr-1.5 ml-2 flex"><Sep /></div>
      <IconButton label="Fit" className="w-[23px]"><FitIcon /></IconButton>
      <IconButton label="Zoom" className="w-[23px]"><ZoomIcon /></IconButton>
      <IconButton label="Rotate" className="w-[23px]"><RotateIcon /></IconButton>
      <IconButton label="Orient View" className="w-[23px]"><OrientIcon /></IconButton>
      <IconButton label="Orient list" className="w-3"><Caret /></IconButton>
      <IconButton label="Rendering Style" className="w-[23px]"><RenderStyleIcon /></IconButton>
      <IconButton label="Rendering list" className="w-3"><Caret /></IconButton>
      <IconButton label="View Cube" className="w-[23px]"><ShadedCubeIcon left="#9aa9e6" right="#6a7cc4" /></IconButton>
      <IconButton label="Cube list" className="w-3"><Caret /></IconButton>
      <IconButton label="Section" className="w-[23px]"><SectionIcon /></IconButton>
      <IconButton label="Section list" className="w-3"><Caret /></IconButton>
      <div className="ml-1.5 flex"><Sep /></div>
      <button type="button" aria-label="Bar options" className="mr-2 mb-1 ml-auto flex h-3 items-center self-end"><Caret /></button>
    </div>
  );
}

function ResourceBar() {
  return (
    <aside className="flex w-[30px] shrink-0 flex-col items-center border-r border-[#777] bg-[#d3d3d3] pl-0.5">
      <button type="button" aria-label="Options" className="flex h-6 items-center pr-1"><GearIcon /></button>
      <button type="button" aria-label="Assembly Navigator" className="mt-4 flex h-[38px] items-center"><AssemblyNavIcon /></button>
      <button type="button" aria-label="Constraint Navigator" className="flex h-[38px] items-center"><ConstraintNavIcon /></button>
      <button type="button" aria-label="Part Navigator" className="-mr-px flex h-[42px] w-[27px] items-center justify-center self-end border border-r-0 border-[#777] bg-white"><PartNavIcon /></button>
      <button type="button" aria-label="Reuse Library" className="flex h-9 items-center"><LibraryIcon /></button>
      <button type="button" aria-label="HD3D Tools" className="mt-2 flex h-12 items-center"><InfoIcon /></button>
      <button type="button" aria-label="Web Browser" className="mt-1 flex h-12 items-center"><WebIcon /></button>
      <button type="button" aria-label="History" className="mt-1 flex h-12 items-center"><ClockIcon /></button>
      <button type="button" aria-label="System Materials" className="flex h-9 items-center"><PaletteIcon /></button>
      <button type="button" aria-label="Process Studio" className="flex h-10 items-center"><VisualWizardIcon /></button>
      <div className="flex h-3 items-center"><WaveIcon /></div>
      <div className="flex flex-col items-center pr-0.5">
        <button type="button" aria-label="First" className="flex h-[15px] items-center"><BarCaret up dim /></button>
        <button type="button" aria-label="Previous" className="flex h-[15px] items-center"><Caret up dim /></button>
        <button type="button" aria-label="Next" className="flex h-[15px] items-center"><Caret /></button>
        <button type="button" aria-label="Last" className="flex h-[15px] items-center"><BarCaret /></button>
      </div>
    </aside>
  );
}

function TreeLines({ expander, first, last }: { expander: string; first: boolean; last: boolean }) {
  return (
    <Svg w={18} h={18}>
      <path d={`M9.5 ${first ? 9 : 0}V${last ? 9 : 18}M10 9.5H18`} stroke="#999" strokeDasharray="1 1" />
      {expander && <rect x="6.5" y="6.5" width="6" height="6" fill="#fafafa" stroke="#ddd" />}
      {expander && <path d={expander === '+' ? 'M7 9.5H12M9.5 7V12' : 'M7 9.5H12'} stroke="#333" />}
    </Svg>
  );
}

function NavigatorTable() {
  const cell = 'border-r border-b border-[#ececec] p-0';
  return (
    <table className="w-full table-fixed border-separate border-spacing-0 border-t border-l border-[#d5d5d5]">
      <colgroup>
        <col className="w-[187px]" />
        <col className="w-[94px]" />
        <col />
      </colgroup>
      <thead>
        <tr className="h-[15px] bg-[#ededed] text-left">
          <th className="border-r border-b border-[#d5d5d5] p-0 pl-1.5 font-normal">
            <span className="flex items-center gap-4">
              Name
              <Svg w={8} h={5}><path d="M0 5L4 0L8 5Z" fill="#111" /></Svg>
            </span>
          </th>
          <th className="border-r border-b border-[#d5d5d5] p-0 pl-1.5 font-normal">Up to Date</th>
          <th className="border-b border-[#d5d5d5] p-0 pl-1.5 font-normal">Comment</th>
        </tr>
      </thead>
      <tbody>
        {TREE.map((n, i) => (
          <tr key={n.name} className="h-[19px] even:h-[18px] even:bg-[#f8f8f8]">
            <td className={cell}>
              <div className="flex h-[17px] items-center">
                <TreeLines expander={n.expander} first={i === 0} last={i === TREE.length - 1} />
                {n.check && <span className="mr-0.5 ml-0.5"><CheckIcon /></span>}
                <span className="mr-0.5">{n.icon}</span>
                {n.name}
              </div>
            </td>
            <td className={cell} />
            <td className={cell} />
          </tr>
        ))}
        <tr className="h-[19px]">
          <td className={cell}>
            <div className="flex h-[17px] items-center pl-7 font-bold whitespace-nowrap text-[#111]">
              <Svg w={10} h={18}><path d="M.5 0V9.5H9" stroke="#999" strokeDasharray="1 1" /></Svg>
              <label className="relative flex h-3 w-3 items-center justify-center">
                <input type="checkbox" defaultChecked aria-label="Datum Coordinate System" className="peer h-3 w-3 appearance-none border border-[#333] bg-white" />
                <span className="pointer-events-none absolute hidden peer-checked:block">
                  <Svg w={10} h={9}><path d="M1 4L4 7.5L9 1.5" stroke="#2d9a3e" strokeWidth="2.2" /></Svg>
                </span>
              </label>
              <CsysIcon />
              <span className="ml-0.5">Datum Coordinate S...</span>
            </div>
          </td>
          <td className={cell}><span className="block pl-1.5"><CheckIcon /></span></td>
          <td className={cell} />
        </tr>
        {Array.from({ length: EMPTY_ROWS }, (_, i) => (
          <tr key={i} className="h-[19px] even:h-[18px] even:bg-[#f8f8f8]">
            <td className={cell} />
            <td className={cell} />
            <td className={cell} />
          </tr>
        ))}
      </tbody>
    </table>
  );
}

function PartNavigator() {
  return (
    <section className="flex w-[358px] shrink-0 flex-col bg-white pr-2 pl-1.5">
      <div className="flex h-[27px] shrink-0 items-center justify-between pr-1.5 pl-0.5">
        <h2>Part Navigator</h2>
        <button type="button" aria-label="Undock">
          <Svg w={11} h={11}><rect x=".5" y="1" width="10" height="9.5" stroke="#222" /><path d="M0 1.5H11" stroke="#222" strokeWidth="2" /></Svg>
        </button>
      </div>
      <div className="min-h-0 flex-1 overflow-hidden"><NavigatorTable /></div>
      <div className="mt-px flex h-[15px] shrink-0 bg-[#eeeeee]">
        <button type="button" aria-label="Scroll left" className="flex w-4 items-center justify-center border-r border-b border-[#555] bg-[#d6d6d6]">
          <Svg w={5} h={8}><path d="M5 0V8L0 4Z" fill="#111" /></Svg>
        </button>
        <div className="w-[281px] border-r-2 border-b-2 border-[#666] bg-[#c4c4c4]" />
        <button type="button" aria-label="Scroll right" className="ml-auto flex w-4 items-center justify-center border-r border-b border-[#555] bg-[#d6d6d6]">
          <Svg w={5} h={8}><path d="M0 0V8L5 4Z" fill="#111" /></Svg>
        </button>
      </div>
      <div className="mt-0.5 h-1 shrink-0 border border-[#888] bg-[#ddd]" />
      {SECTIONS.map((s) => (
        <button
          key={s}
          type="button"
          className="flex h-[22px] shrink-0 items-center justify-between border-b border-[#bbb] pr-1.5 pl-1 text-xs text-[#336b73]"
        >
          {s}
          <Svg w={9} h={7}><path d="M.5 .5L4.5 6L8.5 .5" stroke="#3c6670" strokeWidth="1.5" /></Svg>
        </button>
      ))}
      <div className="h-[5px] shrink-0" />
    </section>
  );
}

function Viewport() {
  return (
    <main className="relative mr-px min-w-0 flex-1 overflow-hidden border-l border-[#777] bg-[linear-gradient(to_bottom,#707070_0%,#707070_8%,#8a8a8a_14%,#a8a8a8_25%,#c0c0c0_35%,#cfcfcf_46%,#d9d9d9_56%,#e2e2e2_66%,#e7e7e7_72%)]">
      {/* datum coordinate system, origin at the middle of the view */}
      <svg width="200" height="200" viewBox="-99 -100 200 200" fill="none" className="absolute top-1/2 left-1/2 -translate-1/2" aria-hidden="true">
        <path d="M0 5V-66M-4 0H0M0 0L55 -17M0 0L46 19M0 -36L31 -46V-9L56 3L26 11V-25L0 -36" stroke="#4d4646" strokeWidth="1" />
        <path d="M0 -70L3 -57H-3ZM60 -18L48 -11L47 -17ZM50 23L38 20L41 14Z" fill="#5c4646" stroke="#463636" strokeWidth=".5" />
        <g className="fill-[#444] font-['Liberation_Sans',sans-serif] text-[11px]">
          <text x="-3" y="-73">Z</text>
          <text x="61" y="-16">Y</text>
          <text x="49" y="29">X</text>
        </g>
      </svg>
      {/* view triad */}
      <svg width="50" height="60" viewBox="0 0 50 60" fill="none" className="absolute bottom-[26px] left-[33px]" aria-hidden="true">
        <path d="M14 24L25 19L36 23V38L26 43L14 38ZM14 24L26 28L36 23M26 28V43M25 19V34L14 38M25 34L36 38" fill="#cbcfcb" fillOpacity=".7" stroke="#7d857d" />
        <path d="M10 40L37 32" stroke="#7f9a86" strokeWidth="2" />
        <path d="M10 40V18" stroke="#1f3d9c" strokeWidth="2" /><path d="M10 12L13 20H7Z" fill="#1f3d9c" />
        <path d="M10 40L22 45" stroke="#a32a2a" strokeWidth="2" /><path d="M27 47L19 47L21 42Z" fill="#a32a2a" />
        <circle cx="9" cy="40.5" r="3" fill="#8a8f8f" />
        <g className="font-['Liberation_Sans',sans-serif] text-[10px]">
          <text x="7" y="12" fill="#26357c">Z</text>
          <text x="34" y="35" fill="#6f8576">Y</text>
          <text x="29" y="53" fill="#8a2222">X</text>
        </g>
      </svg>
      {/* crosshair pointer */}
      <svg width="32" height="32" viewBox="0 0 32 32" fill="none" className="absolute right-[290px] bottom-[77px]" aria-hidden="true">
        <circle cx="16" cy="16" r="10.5" stroke="#222" strokeWidth="1.2" strokeDasharray="11 5.5" strokeDashoffset="-2.7" />
        <path d="M16 1V31M1 16H31" stroke="#333" strokeWidth="3" /><path d="M16 2V30M2 16H30" stroke="#b5b5b5" strokeWidth="1.2" />
      </svg>
    </main>
  );
}

export default function App() {
  const [tab, setTab] = useState('Home');

  return (
    <div className="flex h-screen flex-col bg-black px-px pt-5 pb-[23px] [font-family:'DejaVu_Sans_Condensed','DejaVu_Sans',sans-serif] text-[10px] leading-3 text-[#222]">
      <TitleBar />
      <TabBar tab={tab} onTab={setTab} />
      <Ribbon />
      <SelectionBar />
      <div className="flex min-h-0 flex-1 border-t border-[#777] bg-white">
        <ResourceBar />
        <PartNavigator />
        <Viewport />
      </div>
      <footer className="flex h-5 shrink-0 items-center justify-end gap-1 border-t border-[#777] bg-white pr-[53px]">
        <button type="button" aria-label="Reset status" className="flex h-[15px] w-[15px] items-center justify-center border border-[#999] bg-[#ddd]">
          <Svg w={11} h={10}><path d="M1 1L4 9M2 3L5 4L8 1L10 4L6 7L4 6" fill="#aaa" stroke="#555" /></Svg>
        </button>
        <button type="button" aria-label="Full Screen view"><FullScreenIcon /></button>
      </footer>
    </div>
  );
}
